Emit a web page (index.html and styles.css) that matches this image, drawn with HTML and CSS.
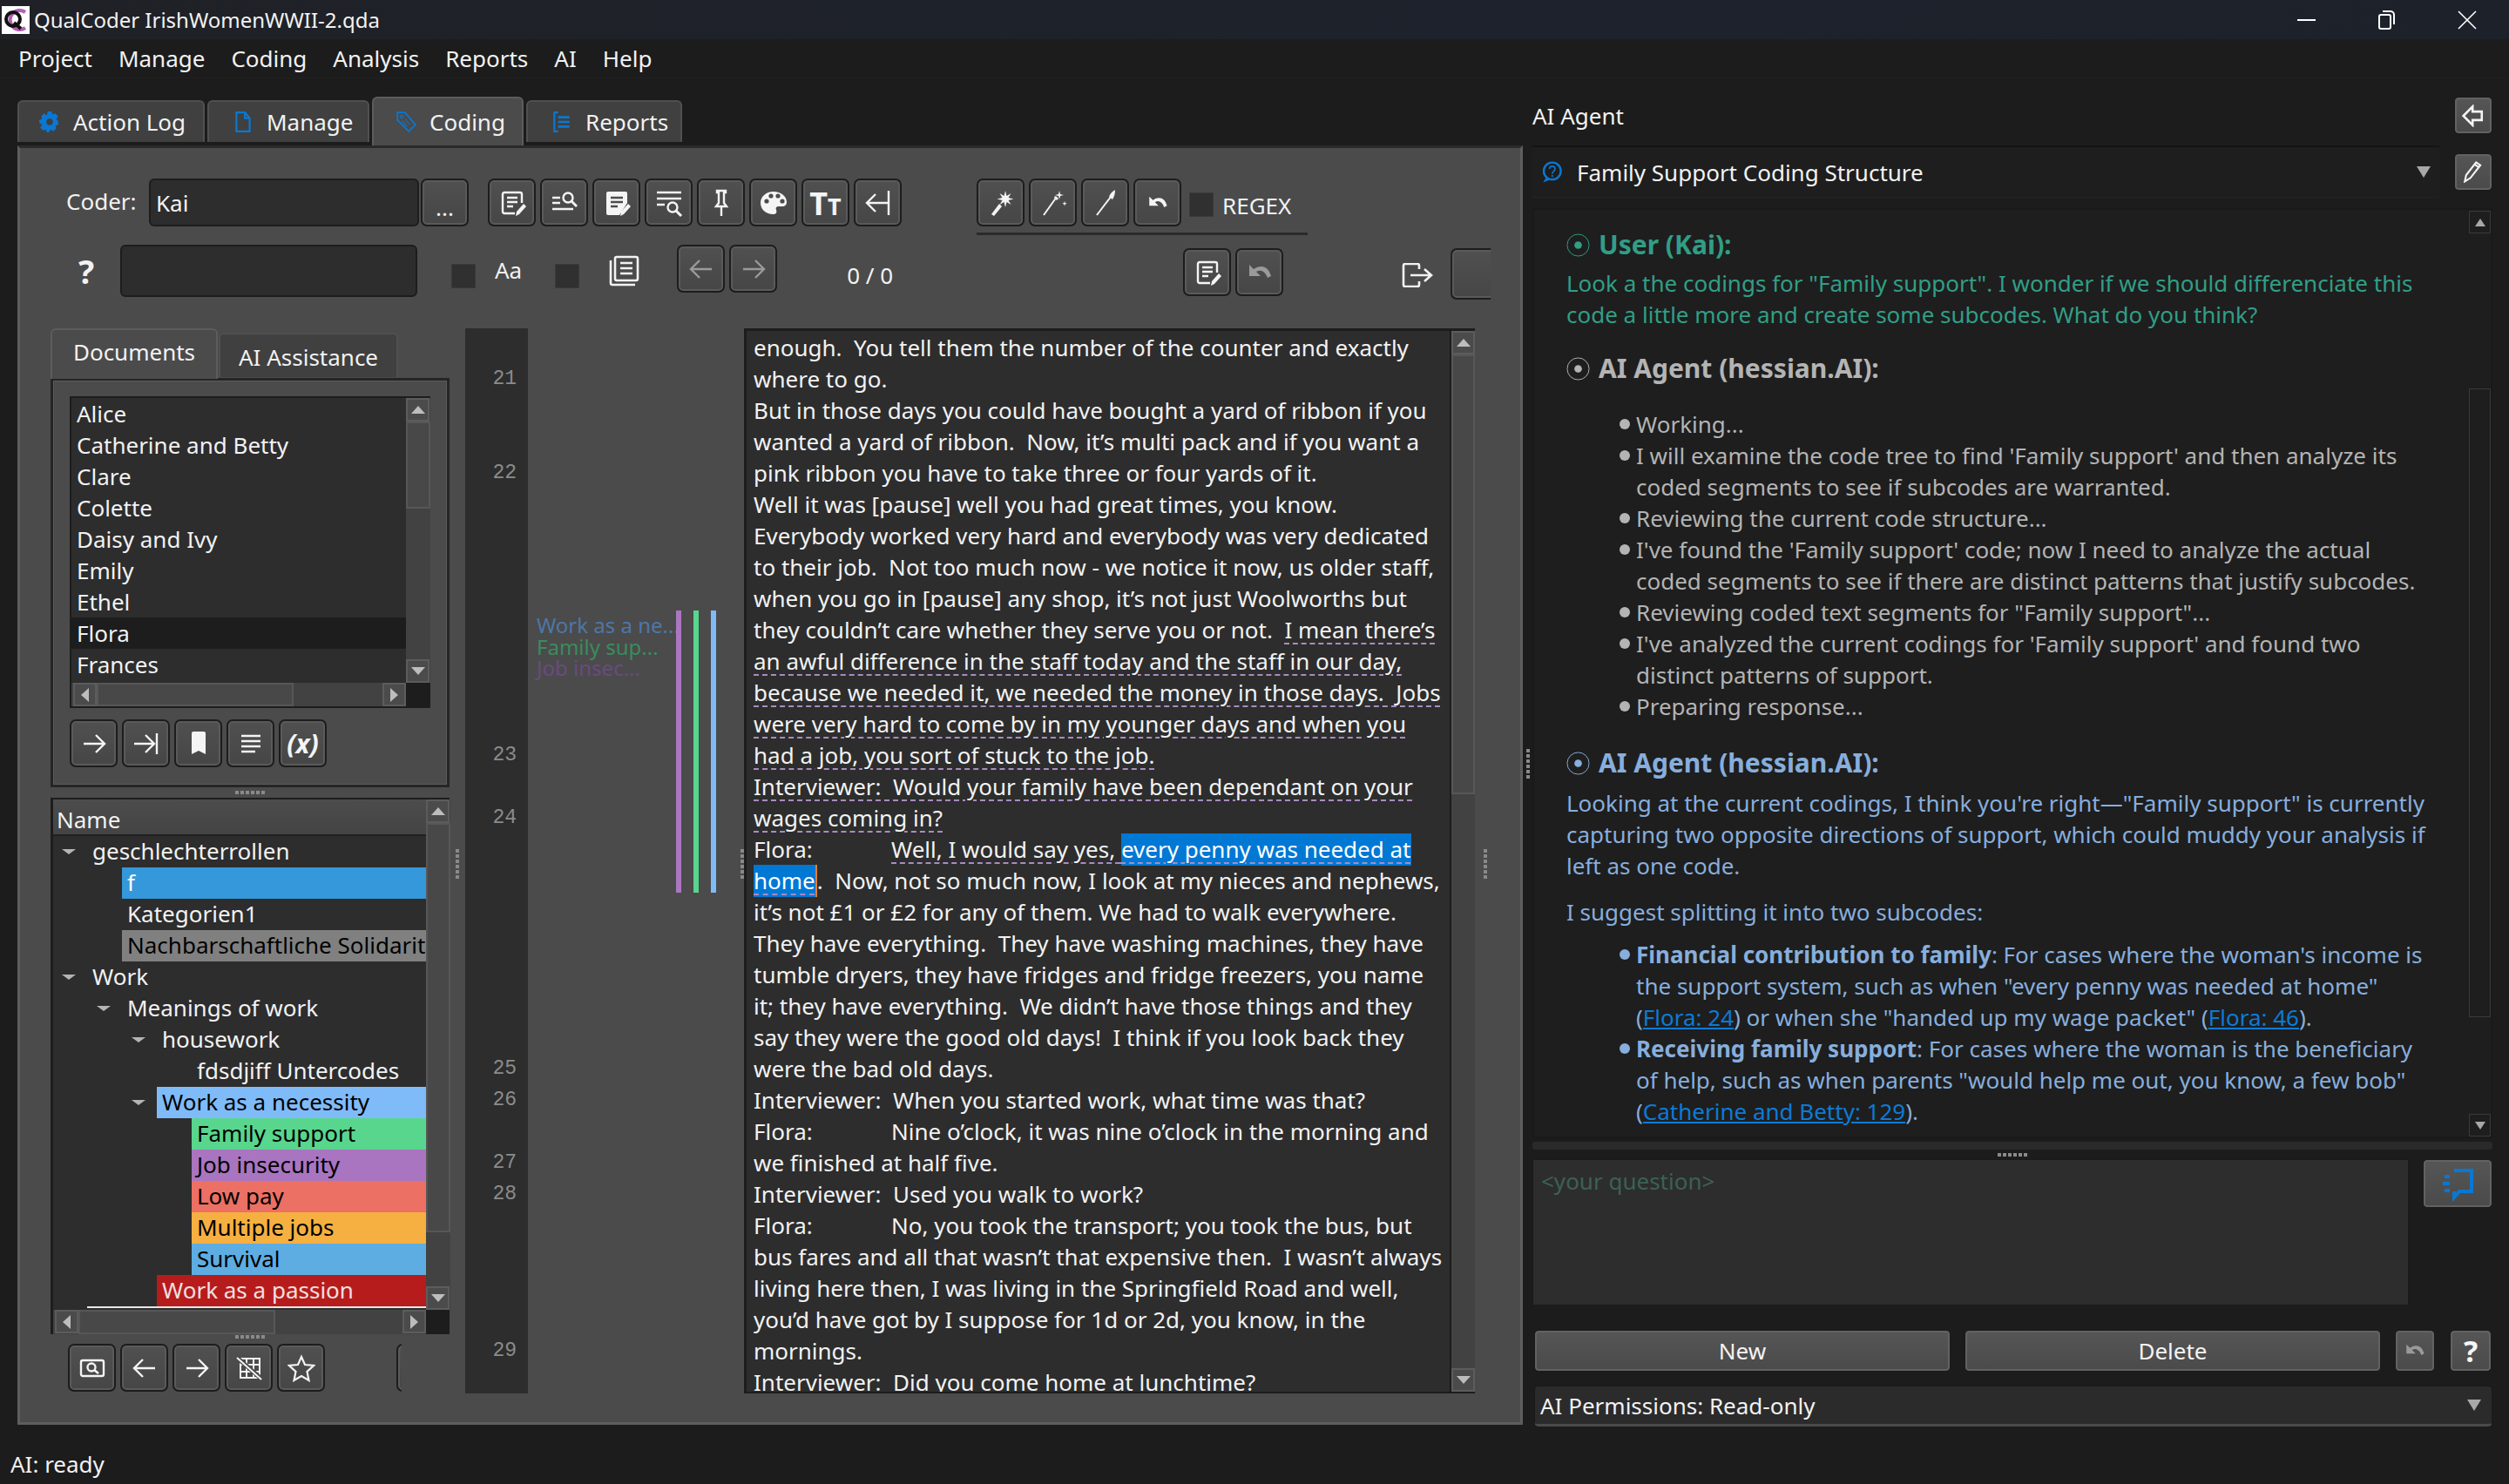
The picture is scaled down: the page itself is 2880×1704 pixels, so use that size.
FILE: index.html
```html
<!DOCTYPE html>
<html lang="en">
<head>
  <meta charset="UTF-8">
  <title>QualCoder IrishWomenWWII-2.qda</title>
  <link rel="stylesheet" href="styles.css">
</head>
<body>

  <!-- Icons used more than once -->
  <svg class="sprite" xmlns="http://www.w3.org/2000/svg">
    <symbol id="i-note" viewBox="0 0 32 32">
      <path d="M19 28H7a2 2 0 0 1-2-2V6a2 2 0 0 1 2-2h18a2 2 0 0 1 2 2v10" fill="none" stroke="currentColor" stroke-width="2.4"/>
      <path d="M10 10h12M10 15h12M10 20h7" stroke="currentColor" stroke-width="2.4"/>
      <path d="M20 31l1-5 8-9 3 3-8 9z" fill="currentColor"/>
    </symbol>
    <symbol id="i-left" viewBox="0 0 32 32">
      <path d="M28 16H5M14 6L4 16l10 10" fill="none" stroke="currentColor" stroke-width="2.4"/>
    </symbol>
    <symbol id="i-right" viewBox="0 0 32 32">
      <path d="M4 16h23M18 6l10 10-10 10" fill="none" stroke="currentColor" stroke-width="2.4"/>
    </symbol>
    <symbol id="i-undo" viewBox="0 0 32 32">
      <path d="M4 7v13h13l-5-5c5-3 10-1 13 7l4-2C26 9 18 6 9 12z" fill="currentColor"/>
    </symbol>
    <symbol id="i-bullseye" viewBox="0 0 28 28">
      <circle cx="14" cy="14" r="13" fill="none" stroke="currentColor" stroke-width="1"/>
      <circle cx="14" cy="14" r="4.5" fill="currentColor"/>
    </symbol>
    <symbol id="i-chat" viewBox="0 0 32 32">
      <circle cx="17" cy="14" r="12" fill="none" stroke="currentColor" stroke-width="3"/>
      <path d="M9 22l-5 8 10-4z" fill="currentColor"/>
      <path d="M13 11c0-5 8-5 8 0 0 3-4 3-4 7" fill="none" stroke="currentColor" stroke-width="2"/>
      <circle cx="17" cy="21" r="1.4" fill="currentColor"/>
    </symbol>
  </svg>

  <!-- Barra de titulo -->
  <header class="titlebar">
    <svg class="app-logo" viewBox="0 0 32 32">
      <rect width="32" height="32" fill="#fff"/>
      <path d="M27 7a11 11 0 1 0 0 18" fill="none" stroke="#b45fb5" stroke-width="4"/>
      <circle cx="13" cy="15" r="8" fill="none" stroke="#111" stroke-width="4"/>
      <path d="M14 19l8 7" stroke="#111" stroke-width="4"/>
    </svg>
    <span class="app-title">QualCoder IrishWomenWWII-2.qda</span>
    <div class="window-controls">
      <svg viewBox="0 0 22 22"><path d="M0 11h21" stroke="#fff" stroke-width="2"/></svg>
      <svg viewBox="0 0 22 22"><rect x="2" y="5" width="13" height="16" rx="2" fill="none" stroke="#fff" stroke-width="2"/><path d="M6 1h9a4 4 0 0 1 4 4v11" fill="none" stroke="#fff" stroke-width="2"/></svg>
      <svg viewBox="0 0 22 22"><path d="M1 1l20 20M21 1L1 21" stroke="#fff" stroke-width="1.6"/></svg>
    </div>
  </header>

  <nav class="menubar">
    <span>Project</span><span>Manage</span><span>Coding</span><span>Analysis</span><span>Reports</span><span>AI</span><span>Help</span>
  </nav>

  <div class="workspace">

    <!-- Panel izquierdo -->
    <section class="coding-col">
      <div class="main-tabs">
        <div class="tab tab-log">
          <svg class="tab-icon" viewBox="0 0 24 24"><path d="M10 1h4l1 3 3-1 3 3-2 3 2 2v4l-3 1 1 3-3 3-3-2-2 3h-2l-1-3-3 1-3-3 2-3-3-2v-3l3-1-1-3 3-3 3 2z" fill="#0a78d2"/><circle cx="12" cy="12" r="3.5" fill="#3f3f3f"/></svg>
          Action Log
        </div>
        <div class="tab tab-manage">
          <svg class="tab-icon" viewBox="0 0 24 24"><path d="M5 2h9l5 6v14H5zM14 2v6h5" fill="none" stroke="#0a78d2" stroke-width="2"/></svg>
          Manage
        </div>
        <div class="tab tab-active tab-coding">
          <svg class="tab-icon" viewBox="0 0 24 24"><path d="M3 2h8l11 13-7 7L3 10z" fill="none" stroke="#0a78d2" stroke-width="1.6"/><circle cx="7.500" cy="6.500" r="1.600" fill="none" stroke="#0a78d2"/><path d="M8 11l5 6M11 9l5 6" stroke="#0a78d2"/></svg>
          Coding
        </div>
        <div class="tab tab-reports">
          <svg class="tab-icon" viewBox="0 0 24 24"><path d="M8 2H4v20h4" fill="none" stroke="#0a78d2" stroke-width="2"/><path d="M8 7h12M8 12h12M8 17h12" stroke="#0a78d2" stroke-width="2.400"/></svg>
          Reports
        </div>
      </div>

      <div class="panel">
        <!-- Fila 1 -->
        <div class="toolbar toolbar-top">
          <label class="coder-label">Coder:</label>
          <div class="field field-coder">Kai</div>
          <div class="btn btn-more">...</div>
          <div class="btn-row btn-row-tools">
            <div class="btn"><svg class="ico"><use href="#i-note"/></svg></div>
            <div class="btn">
              <svg class="ico" viewBox="0 0 32 32"><path d="M2 10h9M2 16h9M2 23h24" stroke="currentColor" stroke-width="2.400"/><circle cx="20" cy="10" r="5.500" fill="none" stroke="currentColor" stroke-width="2.400"/><path d="M24 14l6 6" stroke="currentColor" stroke-width="2.800"/></svg>
            </div>
            <div class="btn">
              <svg class="ico" viewBox="0 0 32 32"><path d="M6 3h20a2 2 0 0 1 2 2v11l-9 14H6a2 2 0 0 1-2-2V5a2 2 0 0 1 2-2z" fill="currentColor"/><path d="M9 10h14M9 15h14M9 20h8" stroke="#4b4b4b" stroke-width="2.400"/><path d="M20 31l1-5 8-9 3 3-8 9z" fill="currentColor"/></svg>
            </div>
            <div class="btn">
              <svg class="ico" viewBox="0 0 32 32"><path d="M2 4h28M2 11h28M2 18h9" stroke="currentColor" stroke-width="2.400"/><circle cx="20" cy="21" r="5.500" fill="none" stroke="currentColor" stroke-width="2.400"/><path d="M24 25l6 6" stroke="currentColor" stroke-width="3"/></svg>
            </div>
            <div class="btn">
              <svg class="ico" viewBox="0 0 32 32"><path d="M11 2h10v2h-2v12l3 4H10l3-4V4h-2z" fill="none" stroke="currentColor" stroke-width="2.400"/><path d="M16 20v11" stroke="currentColor" stroke-width="2.400"/></svg>
            </div>
            <div class="btn">
              <svg class="ico" viewBox="0 0 32 32"><path d="M16 3C7 3 1 9 1 16c0 8 7 13 14 13 4 0 5-2 4-5-1-2 0-4 3-4h4c3 0 5-2 5-5 0-7-7-12-15-12z" fill="currentColor"/><circle cx="8" cy="14" r="2.600" fill="#4b4b4b"/><circle cx="13" cy="8" r="2.600" fill="#4b4b4b"/><circle cx="21" cy="8" r="2.600" fill="#4b4b4b"/><circle cx="26" cy="14" r="2.600" fill="#4b4b4b"/></svg>
            </div>
            <div class="btn btn-tt"><span class="tt-big">T</span><span class="tt-small">T</span></div>
            <div class="btn">
              <svg class="ico" viewBox="0 0 32 32"><path d="M28 2v28" stroke="currentColor" stroke-width="2.400"/><path d="M28 16H4M13 6L3 16l10 10" fill="none" stroke="currentColor" stroke-width="2.400"/></svg>
            </div>
          </div>
          <div class="auto-group">
            <div class="btn-row">
              <div class="btn">
                <svg class="ico" viewBox="0 0 32 32"><path d="M5 29l9-12 3 3-9 11z" fill="currentColor"/><path d="M21 2l1.500 6 5-3-3 5 6 1.500-6 1.500 3 5-5-3-1.500 6-1.500-6-5 3 3-5-6-1.500 6-1.500-3-5 5 3z" fill="currentColor"/></svg>
              </div>
              <div class="btn">
                <svg class="ico" viewBox="0 0 32 32"><path d="M5 30L20 9" stroke="currentColor" stroke-width="2"/><path d="M23 2l1 4 4 1-4 1-1 4-1-4-4-1 4-1zM29 14l.7 2 2 .7-2 .7-.7 2-.7-2-2-.7 2-.7z" fill="currentColor"/><path d="M18 8l4 3-2 2-3-3z" fill="currentColor"/></svg>
              </div>
              <div class="btn">
                <svg class="ico" viewBox="0 0 32 32"><path d="M6 30L22 9" stroke="currentColor" stroke-width="2"/><path d="M20 9c1-3 3-6 7-8 0 4-1 8-3 11z" fill="currentColor"/></svg>
              </div>
              <div class="btn"><svg class="ico ico-small"><use href="#i-undo"/></svg></div>
            </div>
            <span class="box"></span>
            <span class="regex-label">REGEX</span>
          </div>
        </div>

        <!-- Fila 2 -->
        <div class="toolbar toolbar-search">
          <span class="help-mark">?</span>
          <div class="field field-search"></div>
          <span class="box box-case"></span>
          <span class="case-label">Aa</span>
          <span class="box box-all"></span>
          <svg class="ico ico-docs" viewBox="0 0 36 36"><path d="M3 6v26a2 2 0 0 0 2 2h26" fill="none" stroke="currentColor" stroke-width="2.600"/><rect x="8" y="2" width="26" height="27" rx="2" fill="none" stroke="currentColor" stroke-width="2.600"/><path d="M14 9h14M14 15h14M14 21h14" stroke="currentColor" stroke-width="2.600"/></svg>
          <div class="btn-row btn-row-nav">
            <div class="btn btn-dim"><svg class="ico"><use href="#i-left"/></svg></div>
            <div class="btn btn-dim"><svg class="ico"><use href="#i-right"/></svg></div>
          </div>
          <span class="match-count">0 / 0</span>
          <div class="btn-row btn-row-marks">
            <div class="btn"><svg class="ico"><use href="#i-note"/></svg></div>
            <div class="btn btn-dim"><svg class="ico"><use href="#i-undo"/></svg></div>
          </div>
          <svg class="ico ico-exit" viewBox="0 0 36 28"><path d="M20 7V3a2 2 0 0 0-2-2H4a2 2 0 0 0-2 2v22a2 2 0 0 0 2 2h14a2 2 0 0 0 2-2v-4" fill="none" stroke="currentColor" stroke-width="2.600"/><path d="M10 14h22M26 7l8 7-8 7" fill="none" stroke="currentColor" stroke-width="2.600"/></svg>
          <div class="btn btn-cut"></div>
        </div>

        <!-- Area principal -->
        <div class="coding-area">
          <div class="side-stack">
            <div class="sub-tabs">
              <div class="sub-tab sub-tab-active">Documents</div>
              <div class="sub-tab">AI Assistance</div>
            </div>
            <div class="sub-pane">
              <div class="list-box">
                <ul class="doc-list">
                  <li>Alice</li>
                  <li>Catherine and Betty</li>
                  <li>Clare</li>
                  <li>Colette</li>
                  <li>Daisy and Ivy</li>
                  <li>Emily</li>
                  <li>Ethel</li>
                  <li class="selected">Flora</li>
                  <li>Frances</li>
                </ul>
                <div class="vscroll vscroll-docs">
                  <span class="sb-btn up"></span>
                  <span class="sb-thumb"></span>
                  <span class="sb-track"></span>
                  <span class="sb-btn down"></span>
                </div>
                <div class="hscroll hscroll-docs">
                  <span class="sb-btn left"></span>
                  <span class="sb-thumb"></span>
                  <span class="sb-track"></span>
                  <span class="sb-btn right"></span>
                </div>
              </div>
              <div class="btn-row btn-row-docs">
                <div class="btn"><svg class="ico"><use href="#i-right"/></svg></div>
                <div class="btn">
                  <svg class="ico" viewBox="0 0 32 32"><path d="M28 4v24" stroke="currentColor" stroke-width="2.400"/><path d="M2 16h23M15 6l10 10-10 10" fill="none" stroke="currentColor" stroke-width="2.400"/></svg>
                </div>
                <div class="btn">
                  <svg class="ico" viewBox="0 0 32 32"><path d="M8 4a2 2 0 0 1 2-2h12a2 2 0 0 1 2 2v24l-8-4-8 4z" fill="currentColor"/></svg>
                </div>
                <div class="btn">
                  <svg class="ico" viewBox="0 0 32 32"><path d="M5 7h22M5 13h22M5 19h22M5 25h16" stroke="currentColor" stroke-width="2.600"/></svg>
                </div>
                <div class="btn btn-var">(x)</div>
              </div>
            </div>
            <div class="h-split"><span class="grip"></span></div>

            <div class="tree-box">
              <div class="tree-main">
                <div class="tree-head">Name</div>
                <div class="tree-row l0"><i class="caret"></i><span>geschlechterrollen</span></div>
                <div class="tree-row l1"><i></i><span class="c-f">f</span></div>
                <div class="tree-row l1"><i></i><span>Kategorien1</span></div>
                <div class="tree-row l1"><i></i><span class="c-nach">Nachbarschaftliche Solidarität</span></div>
                <div class="tree-row l0"><i class="caret"></i><span>Work</span></div>
                <div class="tree-row l1"><i class="caret"></i><span>Meanings of work</span></div>
                <div class="tree-row l2"><i class="caret"></i><span>housework</span></div>
                <div class="tree-row l3"><i></i><span>fdsdjiff Untercodes</span></div>
                <div class="tree-row l2"><i class="caret"></i><span class="c-need">Work as a necessity</span></div>
                <div class="tree-row l3"><i></i><span class="c-family">Family support</span></div>
                <div class="tree-row l3"><i></i><span class="c-job">Job insecurity</span></div>
                <div class="tree-row l3"><i></i><span class="c-low">Low pay</span></div>
                <div class="tree-row l3"><i></i><span class="c-multi">Multiple jobs</span></div>
                <div class="tree-row l3"><i></i><span class="c-surv">Survival</span></div>
                <div class="tree-row l2"><i></i><span class="c-passion">Work as a passion</span></div>
                <div class="tree-drop"></div>
              </div>
              <div class="vscroll vscroll-tree">
                <span class="sb-btn up"></span>
                <span class="sb-thumb"></span>
                <span class="sb-track"></span>
                <span class="sb-btn down"></span>
              </div>
              <div class="hscroll hscroll-tree">
                <span class="sb-btn left"></span>
                <span class="sb-thumb"></span>
                <span class="sb-track"></span>
                <span class="sb-btn right"></span>
              </div>
            </div>
            <div class="tree-grip"><span class="grip"></span></div>

            <div class="btn-row btn-row-tree">
              <div class="btn">
                <svg class="ico" viewBox="0 0 32 32"><rect x="3" y="7" width="26" height="18" rx="2" fill="none" stroke="currentColor" stroke-width="2.400"/><circle cx="15" cy="15" r="4.500" fill="none" stroke="currentColor" stroke-width="2.400"/><path d="M18 18l5 4" stroke="currentColor" stroke-width="2.600"/></svg>
              </div>
              <div class="btn"><svg class="ico"><use href="#i-left"/></svg></div>
              <div class="btn"><svg class="ico"><use href="#i-right"/></svg></div>
              <div class="btn">
                <svg class="ico" viewBox="0 0 32 32"><path d="M6 5h22v22H6zM6 12h22M6 20h22M13 5v22M21 5v22" fill="none" stroke="currentColor" stroke-width="2"/><path d="M1 3l30 26" stroke="#4b4b4b" stroke-width="5"/><path d="M2 4l28 25" stroke="currentColor" stroke-width="2"/></svg>
              </div>
              <div class="btn">
                <svg class="ico" viewBox="0 0 32 32"><path d="M16 3l4 9 10 1-7.500 7 2 10L16 25l-8.500 5 2-10L2 13l10-1z" fill="none" stroke="currentColor" stroke-width="2.200"/></svg>
              </div>
              <div class="btn btn-stub"></div>
            </div>
          </div>

          <div class="v-split"><span class="grip-v"></span></div>

          <pre class="line-numbers">

21


22








23

24







25
26

27
28




29</pre>

          <!-- Marcas de codigos en el margen -->
          <div class="code-margin">
            <span class="margin-label ml-need">Work as a ne...</span>
            <span class="margin-label ml-family">Family sup...</span>
            <span class="margin-label ml-job">Job insec...</span>
            <span class="code-bar bar-job"></span>
            <span class="code-bar bar-family"></span>
            <span class="code-bar bar-need"></span>
            <span class="grip-v grip-edge"></span>
          </div>

          <div class="editor">
<pre class="editor-text">enough.  You tell them the number of the counter and exactly
where to go.
But in those days you could have bought a yard of ribbon if you
wanted a yard of ribbon.  Now, it’s multi pack and if you want a
pink ribbon you have to take three or four yards of it.
Well it was [pause] well you had great times, you know.
Everybody worked very hard and everybody was very dedicated
to their job.  Not too much now - we notice it now, us older staff,
when you go in [pause] any shop, it’s not just Woolworths but
they couldn’t care whether they serve you or not.  <span class="coded">I mean there’s
an awful difference in the staff today and the staff in our day,
because we needed it, we needed the money in those days.  Jobs
were very hard to come by in my younger days and when you
had a job, you sort of stuck to the job.
Interviewer:  Would your family have been dependant on your
wages coming in?
<span class="speaker">Flora:</span>Well, I would say yes, <span class="picked">every penny was needed at</span>
<span class="picked picked-end">home</span></span>.  Now, not so much now, I look at my nieces and nephews,
it’s not £1 or £2 for any of them. We had to walk everywhere.
They have everything.  They have washing machines, they have
tumble dryers, they have fridges and fridge freezers, you name
it; they have everything.  We didn’t have those things and they
say they were the good old days!  I think if you look back they
were the bad old days.
Interviewer:  When you started work, what time was that?
<span class="speaker">Flora:</span>Nine o’clock, it was nine o’clock in the morning and
we finished at half five.
Interviewer:  Used you walk to work?
<span class="speaker">Flora:</span>No, you took the transport; you took the bus, but
bus fares and all that wasn’t that expensive then.  I wasn’t always
living here then, I was living in the Springfield Road and well,
you’d have got by I suppose for 1d or 2d, you know, in the
mornings.
Interviewer:  Did you come home at lunchtime?</pre>
            <div class="vscroll vscroll-editor">
              <span class="sb-btn up"></span>
              <span class="sb-thumb"></span>
              <span class="sb-track"></span>
              <span class="sb-btn down"></span>
            </div>
          </div>
          <div class="v-split v-split-end"><span class="grip-v"></span></div>
        </div>
      </div>
    </section>

    <div class="col-split"><span class="grip-v"></span></div>

    <!-- Panel del agente -->
    <aside class="agent-col">
      <div class="agent-head">
        <span>AI Agent</span>
        <div class="btn btn-flat btn-back">
          <svg class="ico ico-small" viewBox="0 0 32 32"><path d="M15 3L2 16l13 13v-7h13V10H15z" fill="none" stroke="currentColor" stroke-width="3.200"/></svg>
        </div>
      </div>
      <div class="agent-chat-row">
        <div class="chat-combo">
          <svg class="combo-icon"><use href="#i-chat"/></svg>
          <span>Family Support Coding Structure</span>
          <i class="combo-arrow"></i>
        </div>
        <div class="btn btn-flat btn-edit">
          <svg class="ico ico-small" viewBox="0 0 32 32"><path d="M4 30l2-9L20 3l6 4-14 18z" fill="none" stroke="currentColor" stroke-width="2.600"/><path d="M18 6l6 4" stroke="currentColor" stroke-width="2.600"/></svg>
        </div>
      </div>

      <div class="chat-box">
        <div class="chat-log">
          <h3 class="msg-head user"><svg><use href="#i-bullseye"/></svg>User (Kai):</h3>
          <p class="msg user">Look a the codings for "Family support". I wonder if we should differenciate this<br>code a little more and create some subcodes. What do you think?</p>

          <h3 class="msg-head status"><svg><use href="#i-bullseye"/></svg>AI Agent (hessian.AI):</h3>
          <ul class="msg-list status">
            <li>Working...</li>
            <li>I will examine the code tree to find 'Family support' and then analyze its<br>coded segments to see if subcodes are warranted.</li>
            <li>Reviewing the current code structure...</li>
            <li>I've found the 'Family support' code; now I need to analyze the actual<br>coded segments to see if there are distinct patterns that justify subcodes.</li>
            <li>Reviewing coded text segments for "Family support"...</li>
            <li>I've analyzed the current codings for 'Family support' and found two<br>distinct patterns of support.</li>
            <li>Preparing response...</li>
          </ul>

          <h3 class="msg-head answer"><svg><use href="#i-bullseye"/></svg>AI Agent (hessian.AI):</h3>
          <p class="msg answer">Looking at the current codings, I think you're right—"Family support" is currently<br>capturing two opposite directions of support, which could muddy your analysis if<br>left as one code.</p>
          <p class="msg answer msg-gap">I suggest splitting it into two subcodes:</p>
          <ul class="msg-list answer list-gap">
            <li><b>Financial contribution to family</b>: For cases where the woman's income is<br>the support system, such as when "every penny was needed at home"<br>(<a>Flora: 24</a>) or when she "handed up my wage packet" (<a>Flora: 46</a>).</li>
            <li><b>Receiving family support</b>: For cases where the woman is the beneficiary<br>of help, such as when parents "would help me out, you know, a few bob"<br>(<a>Catherine and Betty: 129</a>).</li>
          </ul>
        </div>
        <div class="chat-scroll">
          <span class="cs-btn up"></span>
          <span class="cs-gap"></span>
          <span class="cs-thumb"></span>
          <span class="cs-track"></span>
          <span class="cs-btn down"></span>
        </div>
      </div>
      <div class="chat-hscroll"></div>
      <div class="agent-split"><span class="grip"></span></div>

      <div class="ask-row">
        <div class="ask-field">&lt;your question&gt;</div>
        <div class="btn btn-flat btn-send">
          <svg viewBox="0 0 40 40"><path d="M16 5h20v24H22l-6 7v-7" fill="none" stroke="#0a78d2" stroke-width="4"/><path d="M5 12h6M3 20h8M5 28h6" stroke="#0a78d2" stroke-width="4" stroke-dasharray="4 0"/></svg>
        </div>
      </div>

      <div class="action-row">
        <div class="btn btn-flat btn-wide">New</div>
        <div class="btn btn-flat btn-wide">Delete</div>
        <div class="btn btn-flat btn-mini btn-dim"><svg class="ico ico-small"><use href="#i-undo"/></svg></div>
        <div class="btn btn-flat btn-mini btn-q">?</div>
      </div>

      <div class="perm-combo">
        <span>AI Permissions: Read-only</span>
        <i class="combo-arrow"></i>
      </div>
    </aside>
  </div>

  <footer class="statusbar">AI: ready</footer>

</body>
</html>
```

FILE: styles.css
```css
* {
  box-sizing: border-box;
}

html, body {
  margin: 0;
  padding: 0;
}

body {
  width: 2880px;
  height: 1704px;
  overflow: hidden;
  display: flex;
  flex-direction: column;
  background: #1c1c1c;
  color: #f2f2f2;
  font-family: "Noto Sans", sans-serif;
  font-size: 26px;
}

.sprite {
  position: absolute;
  width: 0;
  height: 0;
}

/* Titulo y menu */
.titlebar {
  height: 45px;
  display: flex;
  align-items: center;
  background: linear-gradient(to right, #1f2126, #1d222c 60%, #1d212a);
}

.app-logo {
  width: 32px;
  height: 32px;
  margin-left: 2px;
}

.app-title {
  margin-left: 5px;
  font-size: 24px;
}

.window-controls {
  margin-left: auto;
  display: flex;
  gap: 70px;
  padding-right: 37px;
}

.window-controls svg {
  width: 22px;
  height: 22px;
}

.menubar {
  height: 45px;
  display: flex;
  align-items: center;
  padding-left: 6px;
  border-bottom: 1px solid #202020;
}

.menubar span {
  padding: 0 15px;
}

.workspace {
  height: 1546px;
  display: flex;
  align-items: flex-start;
}

/* Pestanas principales */
.coding-col {
  width: 1728px;
  margin-left: 20px;
}

.main-tabs {
  height: 77px;
  display: flex;
  align-items: flex-end;
}

.tab {
  height: 48px;
  margin-bottom: 4px;
  display: flex;
  align-items: center;
  background: #404040;
  border: 2px solid #505050;
  border-bottom: 0;
  border-radius: 6px 6px 0 0;
  margin-right: 3px;
  padding-left: 22px;
}

.tab-log { width: 215px; }
.tab-manage { width: 186px; padding-left: 26px; }
.tab-coding { width: 174px; margin-right: 3px; padding-left: 24px; }
.tab-reports { width: 179px; padding-left: 26px; }

.tab-active {
  height: 56px;
  margin-bottom: 0;
  background: #4b4b4b;
  border-color: #5c5c5c;
}

.tab-icon {
  width: 26px;
  height: 26px;
  margin-right: 14px;
}

.panel {
  height: 1469px;
  background: #4b4b4b;
  border: 3px solid #5e5e5e;
  border-top-color: #2a2a2a;
  padding-top: 35px;
}

/* Botones */
.btn {
  width: 55px;
  height: 55px;
  flex: none;
  display: flex;
  align-items: center;
  justify-content: center;
  background: linear-gradient(#505050, #464646);
  border: 2px solid #1d1d1d;
  border-radius: 7px;
  box-shadow: inset 0 0 0 2px #5a5a5a;
  color: #f4f4f4;
}

.btn-row {
  display: flex;
  gap: 5px;
  flex: none;
}

.btn-dim {
  color: #9a9a9a;
}

.ico {
  width: 32px;
  height: 32px;
}

.ico-small {
  width: 26px;
  height: 26px;
}

.box {
  width: 28px;
  height: 28px;
  flex: none;
  background: #303030;
  border: 1px solid #3a3a3a;
}

/* Fila 1 */
.toolbar {
  display: flex;
  align-items: flex-start;
}

.toolbar-top {
  height: 65px;
}

.coder-label {
  width: 148px;
  padding: 8px 0 0 53px;
}

.field {
  background: #2d2d2d;
  border: 2px solid #1d1d1d;
  border-radius: 6px;
}

.field-coder {
  width: 310px;
  height: 55px;
  padding: 8px 6px;
}

.btn-more {
  margin-left: 2px;
  padding-top: 10px;
}

.btn-row-tools {
  margin-left: 22px;
}

.btn-tt {
  font-weight: 700;
  line-height: 1;
  font-size: 36px;
  align-items: baseline;
  padding-top: 9px;
}

.tt-small {
  font-size: 27px;
}

.auto-group {
  width: 380px;
  height: 65px;
  margin-left: 86px;
  display: flex;
  align-items: flex-start;
  border-bottom: 3px solid #2a2a2a;
}

.auto-group .box {
  margin: 16px 0 0 9px;
}

.regex-label {
  margin: 13px 0 0 10px;
}

/* Fila 2 */
.toolbar-search {
  height: 63px;
  margin-top: 11px;
  position: relative;
}

.help-mark {
  width: 115px;
  padding-left: 67px;
  font-size: 38px;
  font-weight: 700;
  line-height: 60px;
}

.field-search {
  width: 341px;
  height: 60px;
}

.box-case {
  margin: 22px 0 0 39px;
}

.case-label {
  margin: 11px 0 0 22px;
}

.box-all {
  margin: 22px 0 0 38px;
}

.ico-docs {
  width: 36px;
  height: 36px;
  margin: 12px 0 0 33px;
}

.btn-row-nav {
  margin-left: 43px;
}

.match-count {
  width: 386px;
  margin: 17px 0 0 80px;
}

.btn-row-marks {
  margin-top: 4px;
}

.ico-exit {
  width: 36px;
  height: 28px;
  margin: 21px 0 0 136px;
}

.btn-cut {
  width: 60px;
  height: 59px;
  margin: 4px 0 0 20px;
  border-right: 0;
  border-radius: 7px 0 0 7px;
  clip-path: inset(0 14px 0 0);
}

/* Area principal */
.coding-area {
  height: 1223px;
  margin-top: 33px;
  padding-left: 35px;
  display: flex;
  align-items: flex-start;
}

.side-stack {
  width: 458px;
  flex: none;
}

.sub-tabs {
  height: 57px;
  display: flex;
  align-items: flex-end;
}

.sub-tab {
  width: 206px;
  height: 51px;
  margin-bottom: 1px;
  background: #404040;
  border: 2px solid #505050;
  border-bottom: 0;
  border-radius: 6px 6px 0 0;
  text-align: center;
  line-height: 52px;
}

.sub-tab-active {
  width: 192px;
  height: 58px;
  margin-bottom: -1px;
  margin-right: 1px;
  position: relative;
  background: #4b4b4b;
  border-color: #5c5c5c;
  line-height: 50px;
}

.sub-pane {
  height: 470px;
  border: 3px solid #252525;
  box-shadow: inset 0 0 0 1px #5c5c5c;
  padding: 18px 19px 0;
}

.list-box {
  width: 414px;
  height: 358px;
  display: grid;
  grid-template-columns: 384px 28px;
  grid-template-rows: 327px 27px;
  background: #1d1d1d;
  border: 2px solid #1d1d1d;
}

.doc-list {
  margin: 0;
  padding: 0;
  list-style: none;
  background: #2d2d2d;
  overflow: hidden;
}

.doc-list li {
  height: 36px;
  line-height: 36px;
  padding-left: 6px;
}

.doc-list .selected {
  background: #1d1d1d;
}

.btn-row-docs {
  margin-top: 13px;
}

.btn-var {
  font-size: 30px;
  font-weight: 700;
  font-style: italic;
}

.h-split {
  height: 12px;
  display: flex;
  align-items: center;
  justify-content: center;
}

.grip {
  width: 34px;
  height: 4px;
  background: repeating-linear-gradient(to right, #8a8a8a 0 4px, transparent 4px 6px);
}

.grip-v {
  width: 4px;
  height: 34px;
  background: repeating-linear-gradient(to bottom, #8a8a8a 0 4px, transparent 4px 6px);
}

/* Barras de desplazamiento */
.vscroll {
  display: flex;
  flex-direction: column;
  background: #424242;
}

.hscroll {
  display: flex;
  background: #424242;
}

.sb-btn {
  flex: none;
  display: flex;
  align-items: center;
  justify-content: center;
  width: 27px;
  height: 27px;
  background: #4b4b4b;
  border: 2px solid #5c5c5c;
}

.sb-btn::before {
  content: "";
  border: 0 solid transparent;
}

.sb-btn.up::before {
  border-width: 0 8px 9px;
  border-bottom-color: #bdbdbd;
}

.sb-btn.down::before {
  border-width: 9px 8px 0;
  border-top-color: #bdbdbd;
}

.sb-btn.left::before {
  border-width: 8px 9px 8px 0;
  border-right-color: #bdbdbd;
}

.sb-btn.right::before {
  border-width: 8px 0 8px 9px;
  border-left-color: #bdbdbd;
}

.sb-thumb {
  flex: none;
  background: #484848;
  border: 2px solid #575757;
}

.sb-track {
  flex: 1;
}

.vscroll-docs .sb-thumb { height: 100px; }
.hscroll-docs { padding-left: 2px; }
.hscroll-docs .sb-thumb { width: 226px; }

/* Arbol de codigos */
.tree-box {
  height: 616px;
  display: grid;
  grid-template-columns: 428px 28px;
  grid-template-rows: 586px 28px;
  background: #1d1d1d;
  border: 2px solid #1d1d1d;
  border-left-width: 3px;
  border-right-width: 2px;
}

.tree-main {
  background: #2d2d2d;
  overflow: hidden;
  white-space: nowrap;
}

.tree-head {
  height: 42px;
  line-height: 46px;
  padding-left: 4px;
  background: linear-gradient(#4c4c4c, #444);
  border-bottom: 2px solid #202020;
}

.tree-row {
  height: 36px;
  display: flex;
  line-height: 34px;
}

.tree-row i {
  width: 39px;
  flex: none;
  display: flex;
  align-items: center;
  padding-left: 10px;
}

.tree-row .caret::before {
  content: "";
  border-style: solid;
  border-width: 6px 8px 0;
  border-color: #b4b4b4 transparent transparent;
}

.tree-row span {
  flex: 1;
  padding-left: 6px;
}

.l1 { padding-left: 40px; }
.l2 { padding-left: 80px; }
.l3 { padding-left: 120px; }

.tree-drop {
  height: 2px;
  margin-left: 39px;
  background: #e8e8e8;
}

.c-f { background: #3498db; color: #fff; }
.c-nach { background: #808080; color: #000; }
.c-need { background: #7fbbf8; color: #000; }
.c-family { background: #58d68d; color: #000; }
.c-job { background: #a975c0; color: #000; }
.c-low { background: #ec7063; color: #000; }
.c-multi { background: #f5b041; color: #000; }
.c-surv { background: #5dade2; color: #000; }
.c-passion { background: #b71c1c; color: #f0e0e0; }

.vscroll-tree .sb-thumb { height: 470px; }
.hscroll-tree { padding-left: 2px; }
.hscroll-tree .sb-thumb { width: 226px; }

.tree-grip {
  height: 10px;
  display: flex;
  justify-content: center;
  align-items: flex-start;
  margin-top: 1px;
}

.btn-row-tree {
  position: relative;
  margin-left: 20px;
  overflow: hidden;
}

.btn-stub {
  width: 40px;
  margin-left: 77px;
  border-right: 0;
  clip-path: inset(0 34px 0 0);
}

/* Margen */
.v-split {
  width: 18px;
  height: 100%;
  flex: none;
  display: flex;
  justify-content: center;
  padding-top: 598px;
}

.line-numbers {
  width: 72px;
  height: 1223px;
  flex: none;
  margin: 0;
  padding: 4px 13px 0 0;
  background: #2d2d2d;
  color: #8b8b8b;
  font-family: "Liberation Mono", monospace;
  font-size: 23px;
  line-height: 36px;
  text-align: right;
  overflow: hidden;
}

.code-margin {
  width: 248px;
  height: 100%;
  flex: none;
  position: relative;
}

.margin-label {
  position: absolute;
  left: 10px;
  font-size: 24px;
  line-height: 24px;
}

.ml-need { top: 329px; color: #4d77a6; }
.ml-family { top: 354px; color: #3a8c5e; }
.ml-job { top: 378px; color: #6a4a80; }

.code-bar {
  position: absolute;
  top: 324px;
  width: 6px;
  height: 324px;
}

.bar-job { left: 170px; background: #ab77c1; }
.bar-family { left: 190px; background: #58d68d; }
.bar-need { left: 210px; background: #7fbbf8; }

.grip-edge {
  position: absolute;
  left: 244px;
  top: 598px;
}

.editor {
  width: 839px;
  height: 1223px;
  flex: none;
  display: flex;
  background: #2d2d2d;
  border: 3px solid #1d1d1d;
  border-bottom-width: 2px;
}

.editor-text {
  width: 807px;
  height: 100%;
  flex: none;
  margin: 0;
  padding: 1px 0 0 8px;
  font-family: "Noto Sans", sans-serif;
  font-size: 26px;
  line-height: 36px;
  overflow: hidden;
  white-space: pre;
}

.speaker {
  display: inline-block;
  width: 158px;
}

.coded {
  text-decoration: underline dashed #a98cc0 2px;
  text-underline-offset: 5px;
}

.picked {
  background: #0078d4;
  color: #fff;
  padding-bottom: 1px;
}

.picked-end {
  border-right: 2px solid #e08030;
}

.vscroll-editor {
  width: 27px;
  flex: none;
  border-left: 2px solid #1d1d1d;
  width: 29px;
}

.vscroll-editor .sb-btn {
  width: 27px;
}

.vscroll-editor .sb-thumb {
  height: 505px;
}

.v-split-end {
  width: 22px;
}

.v-split-end .grip-v {
  margin-left: 2px;
}

/* Columna del agente */
.col-split {
  width: 11px;
  flex: none;
  display: flex;
  justify-content: center;
  padding-top: 770px;
}

.agent-col {
  width: 1102px;
  flex: none;
  padding-top: 21px;
}

.agent-head {
  height: 43px;
  display: flex;
  justify-content: space-between;
  align-items: center;
}

.btn-flat {
  border-color: #1a1a1a;
  box-shadow: inset 0 0 0 2px #626262;
  background: linear-gradient(#565656, #4a4a4a);
  border-width: 1px;
  border-radius: 5px;
}

.btn-back,
.btn-edit {
  width: 44px;
  height: 43px;
}

.agent-chat-row {
  height: 60px;
  margin-top: 13px;
  display: flex;
  align-items: center;
  justify-content: space-between;
}

.chat-combo {
  width: 1041px;
  height: 60px;
  display: flex;
  align-items: center;
  background: #1e1e1e;
  border-top: 2px solid #141414;
  border-bottom: 1px solid #242424;
}

.combo-icon {
  width: 26px;
  height: 26px;
  margin: 0 16px 0 9px;
  color: #0a78d2;
}

.combo-arrow {
  margin-left: auto;
  margin-right: 9px;
  border-style: solid;
  border-width: 13px 8px 0;
  border-color: #a8a8a8 transparent transparent;
}

.chat-combo .combo-arrow {
  margin-right: 10px;
}

/* Chat */
.chat-box {
  height: 1068px;
  margin-top: 12px;
  display: flex;
  background: #1e1e1e;
  border: 2px solid #191919;
}

.chat-log {
  width: 1074px;
  padding: 20px 0 0 37px;
  line-height: 36px;
  overflow: hidden;
  white-space: nowrap;
}

.msg-head {
  display: flex;
  align-items: center;
  gap: 10px;
  margin: 0;
  height: 40px;
  font-size: 30px;
  font-weight: 700;
}

.msg-head svg {
  width: 27px;
  height: 27px;
}

.user { color: #319e86; }
.status { color: #b4b4b4; }
.answer { color: #87aedd; }

.msg {
  margin: 6px 0 0;
}

.msg.user {
  margin-bottom: 24px;
}

.msg.answer {
  margin-top: 8px;
}

.msg.msg-gap {
  margin-top: 17px;
}

.msg-list {
  margin: 26px 0 27px;
  padding: 0 0 0 80px;
  list-style: none;
}

.list-gap {
  margin-top: 13px;
}

.msg-list li {
  position: relative;
}

.msg-list li::before {
  content: "";
  position: absolute;
  left: -19px;
  top: 12px;
  width: 12px;
  height: 12px;
  border-radius: 50%;
  background: currentColor;
}

.msg-list a {
  color: #0c7bd6;
  text-decoration: underline;
}

.chat-scroll {
  width: 25px;
  flex: none;
  margin-top: 1px;
  display: flex;
  flex-direction: column;
  margin-left: auto;
}

.cs-btn {
  height: 26px;
  flex: none;
  display: flex;
  align-items: center;
  justify-content: center;
  border: 1px solid #3a3a3a;
  background: #1e1e1e;
}

.cs-btn::before {
  content: "";
  border: 0 solid transparent;
}

.cs-btn.up::before {
  border-width: 0 6px 9px;
  border-bottom-color: #a8a8a8;
}

.cs-btn.down::before {
  border-width: 9px 6px 0;
  border-top-color: #a8a8a8;
}

.cs-gap {
  height: 178px;
  flex: none;
}

.cs-thumb {
  height: 722px;
  flex: none;
  border: 1px solid #3a3a3a;
}

.cs-track {
  flex: 1;
}

.chat-hscroll {
  height: 9px;
  margin-top: 4px;
  background: #2a2a2a;
  border-radius: 3px;
}

.agent-split {
  height: 11px;
  display: flex;
  justify-content: center;
  align-items: center;
}

.ask-row {
  height: 168px;
  display: flex;
  justify-content: space-between;
}

.ask-field {
  width: 1006px;
  padding: 6px 9px;
  background: #2d2d2d;
  border: 1px solid #1a1a1a;
  color: #3b6156;
}

.btn-send {
  width: 80px;
  height: 56px;
}

.btn-send svg {
  width: 40px;
  height: 40px;
}

.action-row {
  height: 48px;
  margin-top: 28px;
  display: flex;
  padding-left: 2px;
}

.btn-wide {
  width: 478px;
  height: 48px;
  margin-right: 16px;
}

.btn-mini {
  width: 46px;
  height: 48px;
  margin-right: 17px;
}

.btn-q {
  margin-right: 0;
  width: 48px;
  font-size: 34px;
  font-weight: 700;
}

.perm-combo {
  height: 47px;
  margin: 16px 0 0 2px;
  display: flex;
  align-items: center;
  padding-left: 6px;
  background: #2b2b2b;
  border: 1px solid #1a1a1a;
  border-bottom: 3px solid #4a4a4a;
  border-radius: 5px;
}

.perm-combo .combo-arrow {
  margin-right: 12px;
}

.statusbar {
  height: 68px;
  padding: 27px 0 0 12px;
}
```
